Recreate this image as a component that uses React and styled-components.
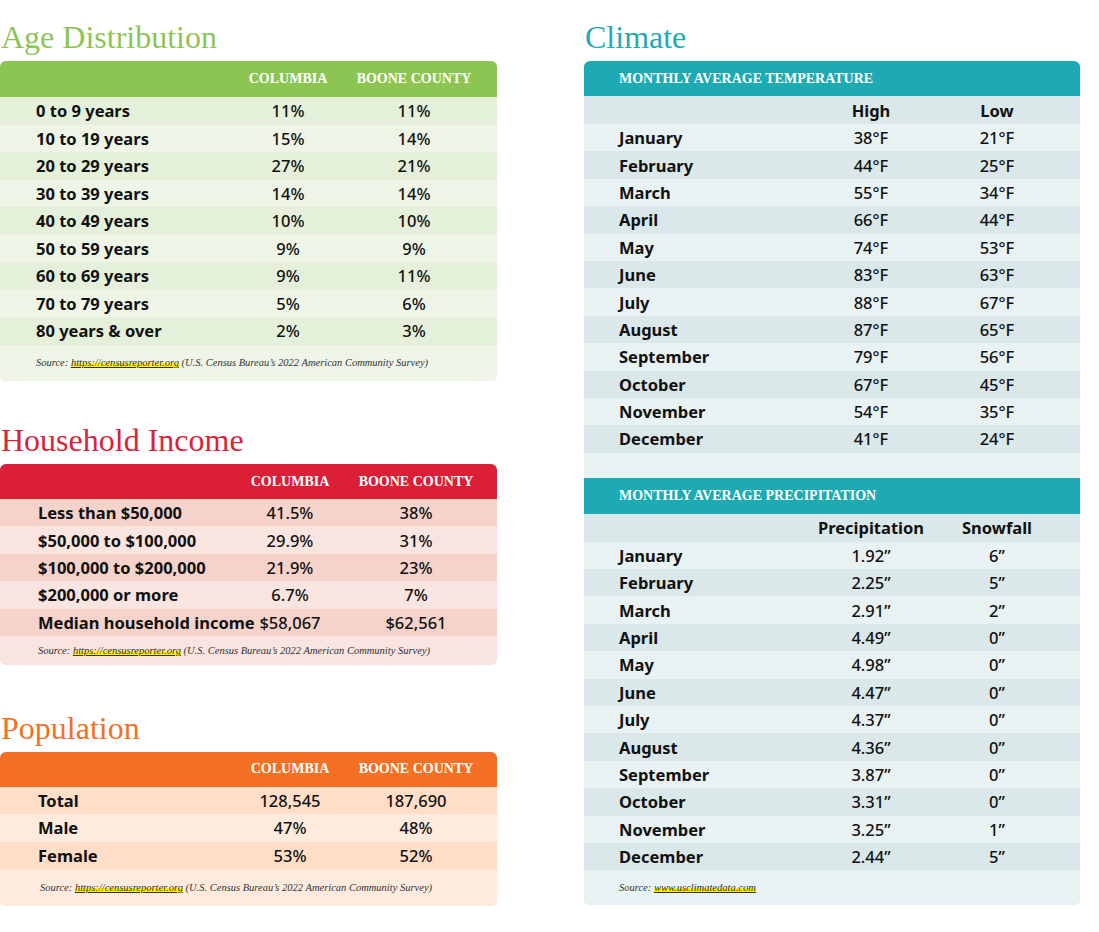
import React from "react";
import styled, { createGlobalStyle } from "styled-components";

const GlobalStyle = createGlobalStyle`
  body {
    margin: 0;
    background: #ffffff;
    font-family: "Noto Sans", "Liberation Sans", sans-serif;
  }
`;

const Page = styled.div`
  display: flex;
  gap: 87px;
  width: 1099px;
  padding-top: 19px;
`;

const Column = styled.div`
  display: flex;
  flex-direction: column;
  width: ${(p) => p.$width}px;
`;

const Section = styled.section`
  margin-top: ${(p) => p.$top || 0}px;
`;

const Title = styled.h2`
  margin: 0 0 6px 1px;
  height: 36px;
  line-height: 36px;
  font-family: "Liberation Serif", serif;
  font-weight: normal;
  font-size: 32px;
  color: ${(p) => p.$color};
`;

const Card = styled.div`
  border-radius: 6px;
  overflow: hidden;
  background: ${(p) => p.$light};
  box-shadow: 0 0 1px rgba(0, 0, 0, 0.12);
`;

const Head = styled.div`
  display: grid;
  grid-template-columns: 197px 110px 142px;
  align-items: center;
  height: ${(p) => p.$height || 35}px;
  padding-left: ${(p) => p.$pad}px;
  background: ${(p) => p.$color};
  color: #ffffff;
  font-family: "Liberation Serif", serif;
  font-weight: bold;
  font-size: 14px;
  text-transform: uppercase;
`;

const HeadCell = styled.span`
  text-align: center;
  white-space: nowrap;
`;

const HeadTitle = styled.span`
  grid-column: 1 / -1;
  white-space: nowrap;
`;

const Row = styled.div`
  display: grid;
  grid-template-columns: 197px 110px 142px;
  align-items: center;
  height: ${(p) => p.$height}px;
  padding-left: ${(p) => p.$pad}px;
  background: ${(p) => (p.$alt ? p.$dark : p.$light)};
  font-size: 16.5px;
  color: #111111;
`;

const Label = styled.span`
  font-weight: 700;
  white-space: nowrap;
`;

const Value = styled.span`
  text-align: center;
  font-weight: ${(p) => (p.$bold ? 700 : 500)};
  white-space: nowrap;
`;

const Spacer = styled.div`
  height: 25px;
  background: ${(p) => p.$light};
`;

const Source = styled.div`
  display: flex;
  align-items: center;
  height: ${(p) => p.$height}px;
  padding-left: ${(p) => p.$pad}px;
  font-family: "Liberation Serif", serif;
  font-style: italic;
  font-size: 10.5px;
  color: #333333;
  white-space: pre;
`;

const Link = styled.span`
  background: linear-gradient(transparent 55%, #fff200 55%);
  text-decoration: underline;
  text-decoration-thickness: 0.5px;
`;

const census = "https://censusreporter.org";
const censusNote = " (U.S. Census Bureau\u2019s 2022 American Community Survey)";

const ageRows = [
  ["0 to 9 years", "11%", "11%"],
  ["10 to 19 years", "15%", "14%"],
  ["20 to 29 years", "27%", "21%"],
  ["30 to 39 years", "14%", "14%"],
  ["40 to 49 years", "10%", "10%"],
  ["50 to 59 years", "9%", "9%"],
  ["60 to 69 years", "9%", "11%"],
  ["70 to 79 years", "5%", "6%"],
  ["80 years & over", "2%", "3%"],
];

const incomeRows = [
  ["Less than $50,000", "41.5%", "38%"],
  ["$50,000 to $100,000", "29.9%", "31%"],
  ["$100,000 to $200,000", "21.9%", "23%"],
  ["$200,000 or more", "6.7%", "7%"],
  ["Median household income", "$58,067", "$62,561"],
];

const popRows = [
  ["Total", "128,545", "187,690"],
  ["Male", "47%", "48%"],
  ["Female", "53%", "52%"],
];

const tempRows = [
  ["January", "38\u00b0F", "21\u00b0F"],
  ["February", "44\u00b0F", "25\u00b0F"],
  ["March", "55\u00b0F", "34\u00b0F"],
  ["April", "66\u00b0F", "44\u00b0F"],
  ["May", "74\u00b0F", "53\u00b0F"],
  ["June", "83\u00b0F", "63\u00b0F"],
  ["July", "88\u00b0F", "67\u00b0F"],
  ["August", "87\u00b0F", "65\u00b0F"],
  ["September", "79\u00b0F", "56\u00b0F"],
  ["October", "67\u00b0F", "45\u00b0F"],
  ["November", "54\u00b0F", "35\u00b0F"],
  ["December", "41\u00b0F", "24\u00b0F"],
];

const rainRows = [
  ["January", "1.92\u201d", "6\u201d"],
  ["February", "2.25\u201d", "5\u201d"],
  ["March", "2.91\u201d", "2\u201d"],
  ["April", "4.49\u201d", "0\u201d"],
  ["May", "4.98\u201d", "0\u201d"],
  ["June", "4.47\u201d", "0\u201d"],
  ["July", "4.37\u201d", "0\u201d"],
  ["August", "4.36\u201d", "0\u201d"],
  ["September", "3.87\u201d", "0\u201d"],
  ["October", "3.31\u201d", "0\u201d"],
  ["November", "3.25\u201d", "1\u201d"],
  ["December", "2.44\u201d", "5\u201d"],
];

const green = { head: "#8cc552", title: "#8dc456", dark: "#e4f0d9", light: "#eef5e7" };
const red = { head: "#da1f36", title: "#d8243a", dark: "#f6d3ca", light: "#f9e4df" };
const orange = { head: "#f37024", title: "#f07126", dark: "#fedec7", light: "#feebdd" };
const teal = { head: "#1eaab3", title: "#22a9b1", dark: "#dae8ea", light: "#e8f2f2" };

function DataRows({ rows, scheme, pad, height, startAlt = true }) {
  return rows.map((r, i) => (
    <Row
      key={r[0]}
      $alt={startAlt ? i % 2 === 0 : i % 2 === 1}
      $dark={scheme.dark}
      $light={scheme.light}
      $pad={pad}
      $height={height}
    >
      <Label>{r[0]}</Label>
      <Value>{r[1]}</Value>
      <Value>{r[2]}</Value>
    </Row>
  ));
}

function CountyTable({ title, scheme, rows, pad, headHeight, rowHeight, sourceHeight, sourcePad }) {
  return (
    <>
      <Title $color={scheme.title}>{title}</Title>
      <Card $light={scheme.light}>
        <Head $color={scheme.head} $pad={pad} $height={headHeight}>
          <span />
          <HeadCell>Columbia</HeadCell>
          <HeadCell>Boone County</HeadCell>
        </Head>
        <DataRows rows={rows} scheme={scheme} pad={pad} height={rowHeight} />
        <Source $height={sourceHeight} $pad={sourcePad}>
          {"Source: "}
          <Link>{census}</Link>
          {censusNote}
        </Source>
      </Card>
    </>
  );
}

function ClimateBlock({ heading, cols, rows, headHeight }) {
  return (
    <>
      <Head $color={teal.head} $pad={35} $height={headHeight}>
        <HeadTitle>{heading}</HeadTitle>
      </Head>
      <Row $alt $dark={teal.dark} $light={teal.light} $pad={35} $height={28}>
        <span />
        <Value $bold>{cols[0]}</Value>
        <Value $bold>{cols[1]}</Value>
      </Row>
      <DataRows rows={rows} scheme={teal} pad={35} height={27.4} startAlt={false} />
    </>
  );
}

export default function App() {
  return (
    <Page>
      <GlobalStyle />
      <Column $width={497}>
        <Section>
          <CountyTable
            title="Age Distribution"
            scheme={green}
            rows={ageRows}
            pad={36}
            headHeight={36}
            rowHeight={27.5}
            sourceHeight={36.5}
            sourcePad={36}
          />
        </Section>
        <Section $top={41}>
          <CountyTable
            title="Household Income"
            scheme={red}
            rows={incomeRows}
            pad={38}
            headHeight={35}
            rowHeight={27.4}
            sourceHeight={29}
            sourcePad={38}
          />
        </Section>
        <Section $top={45}>
          <CountyTable
            title="Population"
            scheme={orange}
            rows={popRows}
            pad={38}
            headHeight={35}
            rowHeight={27.3}
            sourceHeight={37}
            sourcePad={40}
          />
        </Section>
      </Column>
      <Column $width={496}>
        <Section>
          <Title $color={teal.title}>Climate</Title>
          <Card $light={teal.light}>
            <ClimateBlock
              heading="Monthly Average Temperature"
              cols={["High", "Low"]}
              rows={tempRows}
              headHeight={35}
            />
            <Spacer $light={teal.light} />
            <ClimateBlock
              heading="Monthly Average Precipitation"
              cols={["Precipitation", "Snowfall"]}
              rows={rainRows}
              headHeight={36}
            />
            <Source $height={35} $pad={35}>
              {"Source: "}
              <Link>www.usclimatedata.com</Link>
            </Source>
          </Card>
        </Section>
      </Column>
    </Page>
  );
}
